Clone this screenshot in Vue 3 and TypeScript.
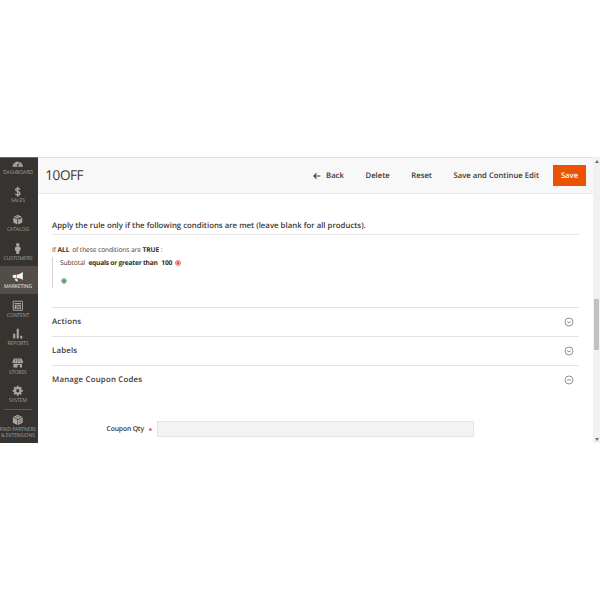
<script setup lang="ts">
import { ref } from 'vue'

interface MenuItem {
  id: string
  label: string
}

const menu: MenuItem[] = [
  { id: 'dashboard', label: 'DASHBOARD' },
  { id: 'sales', label: 'SALES' },
  { id: 'catalog', label: 'CATALOG' },
  { id: 'customers', label: 'CUSTOMERS' },
  { id: 'marketing', label: 'MARKETING' },
  { id: 'content', label: 'CONTENT' },
  { id: 'reports', label: 'REPORTS' },
  { id: 'stores', label: 'STORES' },
  { id: 'system', label: 'SYSTEM' },
]
const active = ref('marketing')

const sections = ref([
  { title: 'Actions', open: false },
  { title: 'Labels', open: false },
  { title: 'Manage Coupon Codes', open: true },
])
const qty = ref('')
</script>

<template>
  <div class="screen">
    <nav class="sidebar">
      <a
        v-for="item in menu"
        :key="item.id"
        class="item"
        :class="{ active: item.id === active }"
        @click="active = item.id"
      >
        <svg class="icon" viewBox="0 0 12 12">
          <g v-if="item.id === 'dashboard'">
            <path d="M.6 10.2A5.4 5.4 0 1 1 11.4 10.2Z" />
            <path class="cut" d="M6 9L8 5M2.5 7.6h1M3.4 5.2l.7.6M6 3.9v.9M8.8 7.6h.8" />
            <circle class="hole" cx="6" cy="8.6" r="1" />
          </g>
          <path
            v-else-if="item.id === 'sales'"
            class="line"
            d="M8.2 3.8C7.9 2.8 7.1 2.4 6 2.4C4.7 2.4 3.8 3 3.8 4C3.8 6.3 8.3 5 8.3 7.7C8.3 8.9 7.3 9.5 6 9.5C4.7 9.5 3.8 9 3.6 7.9M6 .8V11.2"
          />
          <g v-else-if="item.id === 'catalog'">
            <path d="M6 1L10.4 2.9L6 4.9L1.6 2.9ZM1.3 3.8L5.6 5.7V11L1.3 8.9ZM10.7 3.8L6.4 5.7V11L10.7 8.9Z" />
            <path class="cut" d="M3.5 2L8.3 4.1V6.2" />
          </g>
          <g v-else-if="item.id === 'customers'">
            <circle cx="6" cy="1.9" r="1.8" />
            <path d="M4.3 3.7h3.4L9 5v2.6l-1.2.6L7.3 12H4.7L4.2 8.2l-1.2-.6V5Z" />
          </g>
          <g v-else-if="item.id === 'marketing'">
            <path d="M11.3 1V9L7.8 7.6H5V4L7.8 3.2ZM.8 4.3L4.5 4V7.4L.8 7ZM2.7 7.8L5.2 8L6.2 10.8H4Z" />
          </g>
          <g v-else-if="item.id === 'content'">
            <path class="line thin" d="M1.3 1.3h9.6v9.4h-9.6Z" />
            <path d="M2.8 3h6.6v1.5H2.8ZM2.8 5.3h2v4h-2ZM5.6 5.3h3.8v4H5.6Z" />
            <path class="cut" d="M6.5 6.5h1.8v1.8H6.5Z" />
          </g>
          <path v-else-if="item.id === 'reports'" d="M1.2 6h2.2v5H1.2ZM4.9 .9h2.2V11H4.9ZM8.6 8h2.2v3H8.6Z" />
          <g v-else-if="item.id === 'stores'">
            <path d="M2 1.5h8L11.6 5.2C11.6 6.8 9.4 6.8 9.2 6C8.8 6.9 6.4 6.9 6 6C5.6 6.9 3.2 6.9 2.8 6C2.6 6.8.4 6.8.4 5.2ZM1.5 7.2h9v3.8H8.2V8.3H5.8V11H1.5Z" />
            <path class="cut" d="M4.1 2.2L3.5 5.2M6 2.2v3M7.9 2.2L8.5 5.2" />
          </g>
          <g v-else>
            <circle class="gear" cx="6" cy="6" r="2.8" />
            <path class="teeth" d="M6 .7V3M6 9v2.3M.7 6H3M9 6h2.3M2.3 2.3L4 4M8 8L9.7 9.7M2.3 9.7L4 8M8 4L9.7 2.3" />
          </g>
        </svg>
        <span class="label">{{ item.label }}</span>
      </a>
      <a class="item partners">
        <svg class="icon" viewBox="0 0 12 12">
          <path d="M6 .7L10.9 3L6 5.3L1.1 3ZM.9 3.7L5.7 6V11.5L.9 9ZM11.1 3.7L6.3 6V11.5L11.1 9Z" />
          <path class="cut" d="M4.2 2.6L6.2 3.5M6.1 2L8 3M7.4 7.2L9.6 6.1M7.4 9L9.6 7.9" />
        </svg>
        <span class="label">FIND PARTNERS<br />&amp; EXTENSIONS</span>
      </a>
    </nav>

    <main class="page">
      <header class="header">
        <h1>10OFF</h1>
        <div class="buttons">
          <button class="back">
            <svg viewBox="0 0 8 8"><path d="M7.3 4H1M3.5 1.4L.9 4L3.5 6.6" /></svg>
            <span>Back</span>
          </button>
          <button class="delete">Delete</button>
          <button class="reset">Reset</button>
          <button class="continue">Save and Continue Edit</button>
          <button class="save">Save</button>
        </div>
      </header>

      <div class="content">
        <h2>Apply the rule only if the following conditions are met (leave blank for all products).</h2>
        <div class="rule">
          <p class="combine">If <b class="all">ALL</b> <span class="mid">of these conditions are</span> <b>TRUE</b> :</p>
          <div class="children">
            <p class="cond">
              <span class="attr">Subtotal</span><b class="op">equals or greater than</b><b class="val">100</b>
              <svg class="dot remove" viewBox="0 0 6 6">
                <circle cx="3" cy="3" r="2.4" />
                <path d="M2.1 2.1L3.9 3.9M3.9 2.1L2.1 3.9" />
              </svg>
            </p>
            <svg class="dot add" viewBox="0 0 6 6">
              <circle cx="3" cy="3" r="2.4" />
              <path d="M3 1.5V4.5M1.5 3H4.5" />
            </svg>
          </div>
        </div>

        <section v-for="s in sections" :key="s.title" class="section" @click="s.open = !s.open">
          <h3>{{ s.title }}</h3>
          <svg class="toggle" viewBox="0 0 10 10">
            <circle cx="5" cy="5" r="4" />
            <path :d="s.open ? 'M3.1 5.6L5 4.4L6.9 5.6' : 'M3.1 4.6L5 5.8L6.9 4.6'" />
          </svg>
        </section>

        <div class="field">
          <label for="qty">Coupon Qty</label>
          <span class="required">*</span>
          <input id="qty" v-model="qty" type="text" />
        </div>
      </div>
    </main>

    <div class="scrollbar">
      <i class="arrow up"></i>
      <i class="thumb"></i>
      <i class="arrow down"></i>
    </div>
  </div>
</template>

<style>
body {
  background: #fff;
}
</style>

<style scoped>
* {
  box-sizing: border-box;
}
.screen {
  display: flex;
  width: 600px;
  height: 286px;
  margin-top: 157px;
  overflow: hidden;
  font-family: 'Open Sans', 'Noto Sans', sans-serif;
  color: #41362f;
  white-space: nowrap;
  text-rendering: geometricPrecision;
}
h1,
h2,
h3,
p {
  margin: 0;
}
.sidebar {
  flex: none;
  width: 38.3px;
  background: #373330;
  overflow: hidden;
  border-top: 1px solid #6b6866;
}
.item {
  display: flex;
  flex-direction: column;
  align-items: center;
  height: 28.55px;
  padding: 5.4px 2.4px 0 0;
  color: #aaa6a0;
}
.item:first-child {
  margin-top: -6.4px;
}
.item.active {
  background: #524d49;
  color: #f7f3eb;
}
.icon {
  flex: none;
  width: 11.5px;
  height: 11.5px;
  fill: currentColor;
}
.line {
  fill: none;
  stroke: currentColor;
  stroke-width: 1.4;
}
.thin {
  stroke-width: 1;
}
.cut {
  fill: none;
  stroke: #373330;
  stroke-width: 0.6;
}
.hole {
  fill: #373330;
}
.gear {
  fill: none;
  stroke: currentColor;
  stroke-width: 2.2;
}
.teeth {
  stroke: currentColor;
  stroke-width: 1.9;
}
.label {
  font-size: 5.1px;
  line-height: 6px;
  margin-top: 1.4px;
  text-align: center;
  letter-spacing: -0.1px;
}
.partners {
  position: relative;
  height: 40px;
}
.partners::before {
  content: '';
  position: absolute;
  top: 0;
  left: 4px;
  width: 28px;
  height: 1px;
  background: #5f5a56;
}
.page {
  flex: 1;
  min-width: 0;
}
.header {
  display: flex;
  align-items: center;
  height: 37px;
  padding-left: 7px;
  background: #f8f8f8;
  border-top: 1px solid #e0e0e0;
  border-bottom: 1px solid #e9e9e9;
}
h1 {
  font-size: 13.6px;
  font-weight: 400;
  line-height: 18px;
  margin-top: -1px;
  letter-spacing: -0.48px;
}
.buttons {
  display: flex;
  align-items: center;
  margin-left: auto;
  padding-right: 7px;
}
button {
  height: 21px;
  padding: 2px 0 0;
  border: 0;
  background: none;
  color: #41362f;
  font: 600 7.7px/19px 'Open Sans', sans-serif;
  text-rendering: geometricPrecision;
}
.back {
  display: flex;
  align-items: center;
}
.back svg {
  width: 8px;
  height: 8px;
  margin: -2px 5.5px 0 0;
  fill: none;
  stroke: #41362f;
  stroke-width: 1.1;
}
.delete,
.reset,
.continue {
  margin-left: 21.7px;
}
.save {
  width: 33px;
  margin-left: 14px;
  background: #eb5202;
  color: #fff;
}
.content {
  padding: 0 14px 0 13.7px;
}
h2 {
  height: 41px;
  padding-top: 26px;
  border-bottom: 1px solid #e6e6e2;
  font-size: 7.82px;
  font-weight: 600;
  line-height: 13px;
}
.rule {
  height: 72px;
  padding-top: 9.5px;
  font-size: 6.7px;
  line-height: 10px;
  letter-spacing: -0.12px;
}
b {
  font-weight: 700;
  color: #303030;
}
.mid {
  margin-left: 1.3px;
}
.children {
  height: 31px;
  margin-top: 2px;
  padding: 1px 0 0 7px;
  border-left: 1px solid #d3d3d3;
}
.cond {
  display: flex;
  align-items: center;
}
.op {
  margin-left: 3.3px;
  letter-spacing: -0.25px;
}
.val {
  margin: 0 2.8px 0 3.5px;
}
.dot {
  display: block;
  width: 6px;
  height: 6px;
  fill: none;
}
.remove circle {
  fill: #f8c0bd;
  stroke: #e66;
}
.remove path {
  stroke: #d33;
  stroke-width: 0.9;
}
.add {
  margin: 10.2px 0 0 1.5px;
}
.add circle {
  fill: #a9cdb0;
  stroke: #7ab285;
}
.add path {
  stroke: #2c7a3c;
  stroke-width: 0.9;
}
.section {
  display: flex;
  align-items: center;
  justify-content: space-between;
  height: 28.9px;
  padding-right: 5px;
  border-top: 1px solid #e3e3e3;
}
h3 {
  font-size: 7.8px;
  font-weight: 600;
  line-height: 12px;
  letter-spacing: 0.22px;
  margin-top: 0.8px;
}
.toggle {
  width: 10px;
  height: 10px;
  fill: none;
  stroke: #888;
  stroke-width: 0.9;
}
.field {
  display: flex;
  align-items: center;
  height: 16px;
  margin-top: 27.5px;
  padding-left: 54.5px;
  font-size: 6.8px;
  font-weight: 600;
}
label {
  width: 37px;
  margin-top: -1px;
  letter-spacing: -0.15px;
}
.required {
  width: 13.5px;
  padding: 3px 0 0 5px;
  color: #e22626;
  line-height: 8px;
}
input {
  width: 317px;
  height: 16px;
  padding: 0 4px;
  border: 1px solid #e4e4e4;
  background: #f3f3f3;
  font: inherit;
}
.scrollbar {
  display: flex;
  flex-direction: column;
  align-items: center;
  flex: none;
  width: 7px;
  background: #f1f1f1;
}
.arrow {
  border: 2px solid transparent;
}
.up {
  margin-top: 3px;
  border-bottom: 3px solid #707070;
  border-top: 0;
}
.down {
  margin-top: auto;
  margin-bottom: 2px;
  border-top: 3px solid #707070;
  border-bottom: 0;
}
.thumb {
  width: 5px;
  height: 51px;
  margin-top: 135.5px;
  background: #c1c1c1;
}
</style>
